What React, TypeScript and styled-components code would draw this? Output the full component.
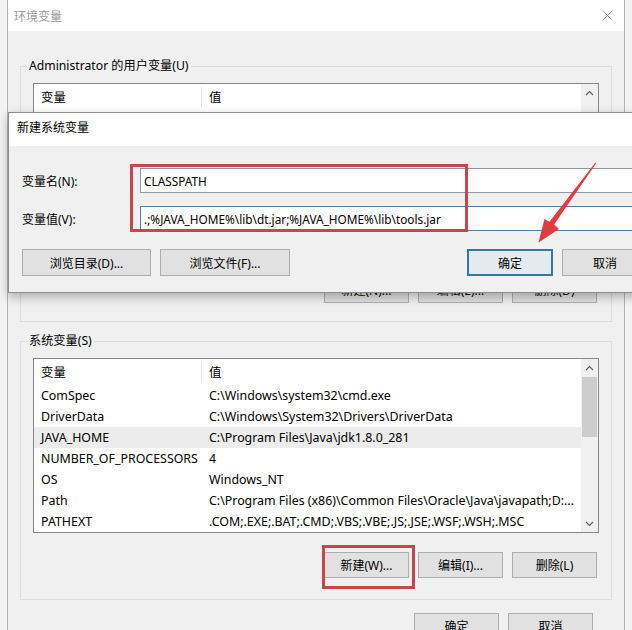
import React from 'react';
import styled, { createGlobalStyle } from 'styled-components';

const Global = createGlobalStyle`
  html, body { margin: 0; padding: 0; width: 632px; height: 630px; overflow: hidden; background: #f3f3f3; }
  body { font-family: "Noto Sans", "Noto Sans CJK SC", sans-serif; font-size: 12px; color: #000; }
  * { box-sizing: border-box; }
  #root { width: 632px; height: 630px; }
`;

const Stage = styled.div`
  position: relative;
  width: 632px;
  height: 630px;
  overflow: hidden;
`;

const Window = styled.div`
  margin-left: 7px;
  width: 618px;
  height: 630px;
  border-left: 1px solid #b4b4b4;
  border-right: 1px solid #b4b4b4;
  background: #f0f0f0;
  display: flex;
  flex-direction: column;
`;

const TitleBar = styled.div<{ $h: number; $pb?: number; $pl?: number }>`
  height: ${p => p.$h}px;
  flex: none;
  background: #fff;
  display: flex;
  align-items: center;
  justify-content: space-between;
  padding: 0 11px ${p => p.$pb ?? 0}px ${p => p.$pl ?? 6}px;
`;

const Title = styled.span<{ $inactive?: boolean }>`
  color: ${p => (p.$inactive ? '#9a9a9a' : '#000')};
  font-size: 12px;
`;

const Content = styled.div`
  padding: 27px 12px 0 12px;
  display: flex;
  flex-direction: column;
`;

const Group = styled.fieldset<{ $pb: number; $mt?: number }>`
  margin: ${p => p.$mt ?? 0}px 0 0 0;
  min-width: 0;
  border: 1px solid #dcdcdc;
  padding: 0 12px ${p => p.$pb}px 12px;
`;

const Legend = styled.legend`
  padding: 0 2px;
  margin-left: -6px;
  line-height: 16px;
  height: 16px;
  font-size: 12.2px;
  color: #000;
`;

const ListBox = styled.div<{ $h: number }>`
  margin-top: 9px;
  height: ${p => p.$h}px;
  border: 1px solid #828790;
  background: #fff;
  display: flex;
`;

const Table = styled.div`
  flex: 1;
  display: flex;
  flex-direction: column;
  min-width: 0;
  font-size: 12.4px;
`;

const Header = styled.div`
  height: 26px;
  display: flex;
  align-items: center;
  flex: none;
`;

const HeadCell = styled.div<{ $w?: number }>`
  width: ${p => (p.$w ? `${p.$w}px` : 'auto')};
  flex: ${p => (p.$w ? 'none' : '1')};
  padding-left: 7px;
  white-space: nowrap;
`;

const HeadDivider = styled.div`
  width: 1px;
  height: 20px;
  background: #e5e5e5;
  flex: none;
`;

const Row = styled.div<{ $sel?: boolean }>`
  height: 21px;
  display: grid;
  grid-template-columns: 168px 1fr;
  align-items: center;
  background: ${p => (p.$sel ? '#ececec' : 'transparent')};
`;

const Cell = styled.div`
  padding-left: 7px;
  white-space: nowrap;
  overflow: hidden;
`;

const ScrollBar = styled.div`
  width: 17px;
  flex: none;
  background: #f0f0f0;
  display: flex;
  flex-direction: column;
  align-items: center;
`;

const ScrollArrow = styled.div`
  width: 17px;
  height: 17px;
  display: flex;
  align-items: center;
  justify-content: center;
  flex: none;
`;

const Thumb = styled.div`
  width: 15px;
  height: 60px;
  margin-top: 1px;
  background: #cdcdcd;
  flex: none;
`;

const Track = styled.div`
  flex: 1;
`;

const ButtonRow = styled.div<{ $mt: number; $pr: number }>`
  margin-top: ${p => p.$mt}px;
  padding-right: ${p => p.$pr}px;
  display: flex;
  justify-content: flex-end;
  gap: 9px;
`;

const Button = styled.button<{ $w?: number; $h?: number; $default?: boolean }>`
  width: ${p => p.$w ?? 85}px;
  height: ${p => p.$h ?? 26}px;
  flex: none;
  margin: 0;
  padding: 0;
  font: inherit;
  font-size: 12px;
  color: #000;
  background: ${p => (p.$default ? '#e3ebf1' : '#e1e1e1')};
  border: ${p => (p.$default ? '2px solid #35789c' : '1px solid #adadad')};
  white-space: nowrap;
`;

const Dialog = styled.div`
  position: absolute;
  left: 8px;
  top: 112px;
  width: 654px;
  border: 1px solid #8c8c8c;
  background: #f0f0f0;
  box-shadow: 0 4px 10px rgba(0, 0, 0, 0.28);
  display: flex;
  flex-direction: column;
`;

const DialogBody = styled.div`
  padding: 22px 13px 16px 13px;
  display: flex;
  flex-direction: column;
`;

const Form = styled.div`
  display: grid;
  grid-template-columns: 118px 1fr;
  row-gap: 13px;
  align-items: center;
`;

const FieldLabel = styled.label`
  white-space: nowrap;
`;

const Input = styled.div<{ $focus?: boolean }>`
  height: 25px;
  background: #fff;
  border: 1px solid ${p => (p.$focus ? '#4f7fa3' : '#8e9aa6')};
  display: flex;
  align-items: center;
  padding-left: 3px;
  font-size: 11.8px;
  white-space: nowrap;
  overflow: hidden;
`;

const DialogButtons = styled.div`
  margin-top: 18px;
  display: flex;
  gap: 9px;
`;

const RightGroup = styled.div`
  margin-left: auto;
  display: flex;
  gap: 9px;
`;

const Highlight = styled.div<{ $l: number; $t: number; $w: number; $h: number }>`
  position: absolute;
  left: ${p => p.$l}px;
  top: ${p => p.$t}px;
  width: ${p => p.$w}px;
  height: ${p => p.$h}px;
  border: 3px solid #c5474b;
  pointer-events: none;
`;

const Overlay = styled.svg`
  position: absolute;
  left: 0;
  top: 0;
  pointer-events: none;
`;

const Chevron = ({ up }: { up?: boolean }) => (
  <svg width="9" height="6" viewBox="0 0 9 6">
    <path
      d={up ? 'M1 5 L4.5 1.5 L8 5' : 'M1 1 L4.5 4.5 L8 1'}
      fill="none"
      stroke="#606060"
      strokeWidth="1.2"
    />
  </svg>
);

const CloseIcon = () => (
  <svg width="11" height="11" viewBox="0 0 11 11">
    <path d="M0.5 0.5 L10.5 10.5 M10.5 0.5 L0.5 10.5" stroke="#a0a0a0" strokeWidth="1" />
  </svg>
);

const sysRows: [string, string][] = [
  ['ComSpec', 'C:\\Windows\\system32\\cmd.exe'],
  ['DriverData', 'C:\\Windows\\System32\\Drivers\\DriverData'],
  ['JAVA_HOME', 'C:\\Program Files\\Java\\jdk1.8.0_281'],
  ['NUMBER_OF_PROCESSORS', '4'],
  ['OS', 'Windows_NT'],
  ['Path', 'C:\\Program Files (x86)\\Common Files\\Oracle\\Java\\javapath;D:...'],
  ['PATHEXT', '.COM;.EXE;.BAT;.CMD;.VBS;.VBE;.JS;.JSE;.WSF;.WSH;.MSC'],
];

const VarList = ({ rows, height }: { rows: [string, string][]; height: number }) => (
  <ListBox $h={height}>
    <Table>
      <Header>
        <HeadCell $w={167}>变量</HeadCell>
        <HeadDivider />
        <HeadCell>值</HeadCell>
      </Header>
      {rows.map(([k, v]) => (
        <Row key={k} $sel={k === 'JAVA_HOME'}>
          <Cell>{k}</Cell>
          <Cell>{v}</Cell>
        </Row>
      ))}
    </Table>
    <ScrollBar>
      <ScrollArrow>
        <Chevron up />
      </ScrollArrow>
      {rows.length > 0 && <Thumb />}
      <Track />
      <ScrollArrow>
        <Chevron />
      </ScrollArrow>
    </ScrollBar>
  </ListBox>
);

export default function App() {
  return (
    <Stage>
      <Global />
      <Window>
        <TitleBar $h={31}>
          <Title $inactive>环境变量</Title>
          <CloseIcon />
        </TitleBar>
        <Content>
          <Group $pb={18}>
            <Legend>Administrator 的用户变量(U)</Legend>
            <VarList rows={[]} height={175} />
            <ButtonRow $mt={19} $pr={2}>
              <Button>新建(N)...</Button>
              <Button>编辑(E)...</Button>
              <Button>删除(D)</Button>
            </ButtonRow>
          </Group>
          <Group $pb={21} $mt={11}>
            <Legend>系统变量(S)</Legend>
            <VarList rows={sysRows} height={175} />
            <ButtonRow $mt={19} $pr={2}>
              <Button>新建(W)...</Button>
              <Button>编辑(I)...</Button>
              <Button>删除(L)</Button>
            </ButtonRow>
          </Group>
          <ButtonRow $mt={13} $pr={19}>
            <Button>确定</Button>
            <Button>取消</Button>
          </ButtonRow>
        </Content>
      </Window>

      <Dialog>
        <TitleBar $h={33} $pb={5} $pl={8}>
          <Title>新建系统变量</Title>
        </TitleBar>
        <DialogBody>
          <Form>
            <FieldLabel>变量名(N):</FieldLabel>
            <Input>CLASSPATH</Input>
            <FieldLabel>变量值(V):</FieldLabel>
            <Input $focus>.;%JAVA_HOME%\lib\dt.jar;%JAVA_HOME%\lib\tools.jar</Input>
          </Form>
          <DialogButtons>
            <Button $w={129} $h={27}>浏览目录(D)...</Button>
            <Button $w={130} $h={27}>浏览文件(F)...</Button>
            <RightGroup>
              <Button $w={86} $h={27} $default>确定</Button>
              <Button $w={86} $h={27}>取消</Button>
            </RightGroup>
          </DialogButtons>
        </DialogBody>
      </Dialog>

      <Highlight $l={130} $t={164} $w={338} $h={68} />
      <Highlight $l={322} $t={545} $w={93} $h={44} />

      <Overlay width="632" height="630" viewBox="0 0 632 630">
        <polygon
          points="595.4,162.6 596,163.4 554.2,224.5 559,229 538.5,242.5 544.5,219 549.5,221.8"
          fill="#e23b3d"
        />
      </Overlay>
    </Stage>
  );
}
